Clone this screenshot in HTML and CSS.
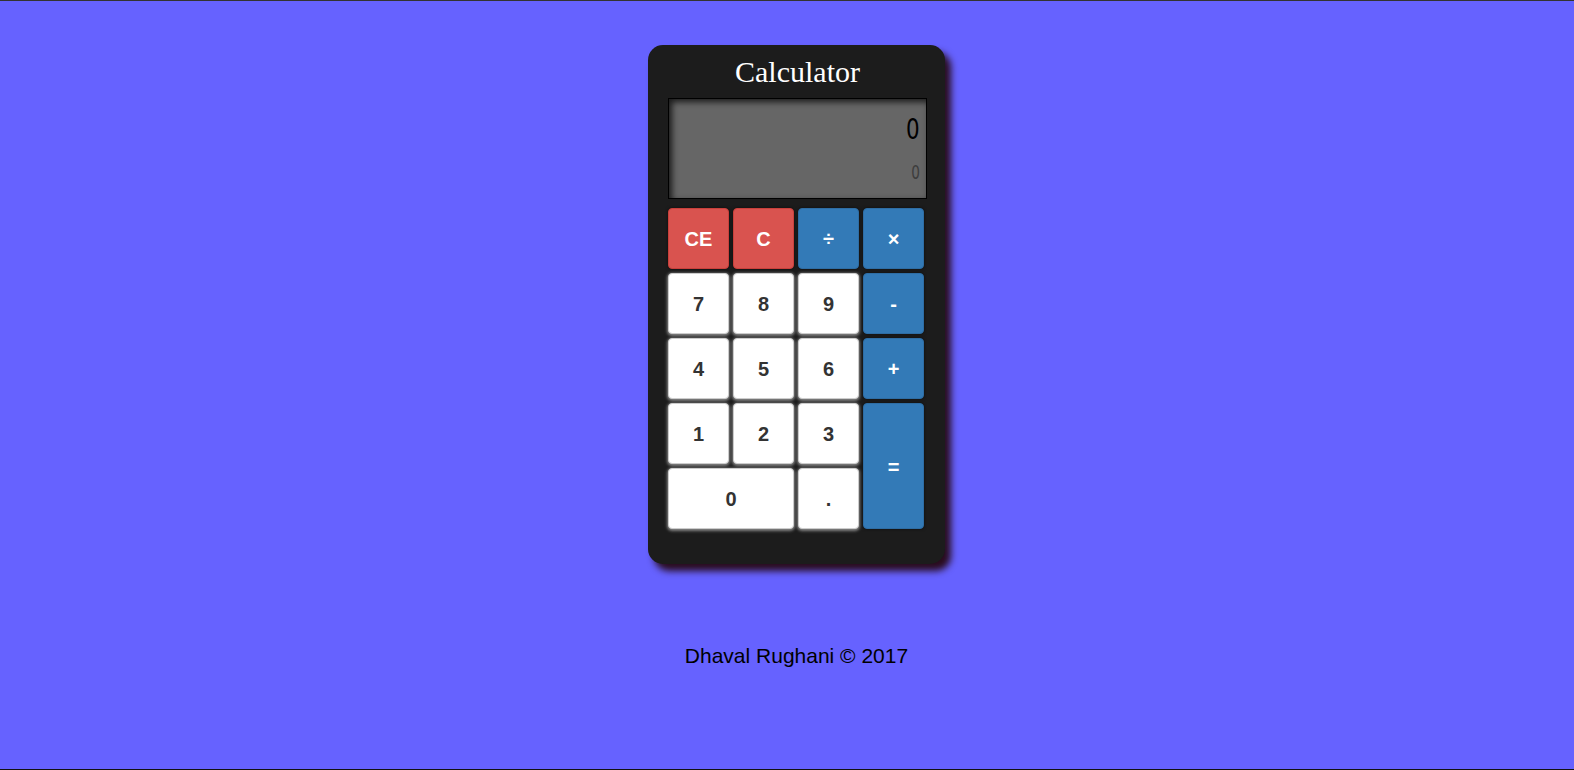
FILE: index.html
```html
<!DOCTYPE html>
<html>
<head>
<meta charset="utf-8">
<title>Calculator</title>
<link rel="stylesheet" href="styles.css">
</head>
<body>
<div class="page">
  <div class="calculator">
    <h1 class="title">Calculator</h1>
    <div class="screen">
      <div class="current">0</div>
      <div class="history">0</div>
    </div>
    <div class="keys">
      <button class="key danger">CE</button>
      <button class="key danger">C</button>
      <button class="key primary">÷</button>
      <button class="key primary">×</button>
      <button class="key light">7</button>
      <button class="key light">8</button>
      <button class="key light">9</button>
      <button class="key primary">-</button>
      <button class="key light">4</button>
      <button class="key light">5</button>
      <button class="key light">6</button>
      <button class="key primary">+</button>
      <button class="key light">1</button>
      <button class="key light">2</button>
      <button class="key light">3</button>
      <button class="key primary equals">=</button>
      <button class="key light zero">0</button>
      <button class="key light dot">.</button>
    </div>
  </div>
  <footer class="footer">Dhaval Rughani © 2017</footer>
</div>
</body>
</html>
```

FILE: styles.css
```css
html, body {
  margin: 0;
  padding: 0;
  height: 100%;
}
body {
  background: #6662ff;
  border-top: 1px solid #333;
  border-bottom: 1px solid #111;
  box-sizing: border-box;
  font-family: "Liberation Sans", Arial, sans-serif;
}
.page {
  display: flex;
  flex-direction: column;
  align-items: center;
  padding-left: 19px;
  padding-top: 44px;
}
.calculator {
  width: 297px;
  box-sizing: border-box;
  background: #1c1c1c;
  border-radius: 15px;
  padding: 10px 18px 35px 20px;
  box-shadow: 6px 7px 7px #2a0c1e;
}
.title {
  margin: 0 0 9px;
  text-align: center;
  color: #fff;
  font-family: "Liberation Serif", "Times New Roman", serif;
  font-weight: normal;
  font-size: 30px;
  line-height: 34px;
}
.screen {
  width: 259px;
  height: 101px;
  box-sizing: border-box;
  border: 1px solid #000;
  background: #666;
  box-shadow: inset 3px 3px 6px rgba(0,0,0,0.75);
  display: flex;
  flex-direction: column;
  align-items: flex-end;
  padding: 15px 6px 0 0;
}
.current {
  font-family: "Liberation Sans Narrow", "DejaVu Sans Condensed", sans-serif;
  font-size: 29px;
  line-height: 30px;
  color: #000;
  transform: scaleX(0.82);
  transform-origin: right center;
}
.history {
  margin-top: 17px;
  font-family: "Liberation Sans Narrow", "DejaVu Sans Condensed", sans-serif;
  font-size: 19px;
  line-height: 22px;
  color: #3d3d3d;
  transform: scaleX(0.8);
  transform-origin: right center;
}
.keys {
  margin-top: 9px;
  display: grid;
  grid-template-columns: repeat(4, 61px);
  grid-template-rows: repeat(5, 61px);
  gap: 4px;
}
.key {
  margin: 0;
  padding: 2px 0 0;
  font-family: "Liberation Sans", Arial, sans-serif;
  font-weight: bold;
  font-size: 20px;
  border-radius: 4px;
  border: 1px solid transparent;
  cursor: pointer;
}
.danger {
  background: #d9534f;
  border-color: #c9403b;
  color: #fff;
  box-shadow: 0 0 3px rgba(0,0,0,0.6);
}
.primary {
  background: #337ab7;
  border-color: #2e6da4;
  color: #fff;
  box-shadow: 0 0 3px rgba(0,0,0,0.6);
}
.light {
  background: #fff;
  border-color: #ccc;
  color: #333;
  box-shadow: 0 1px 3px 1px rgba(150,150,150,0.85);
}
.equals {
  grid-row: 4 / span 2;
  grid-column: 4;
}
.zero {
  grid-column: 1 / span 2;
}
.footer {
  margin-top: 80px;
  font-size: 21px;
  line-height: 23px;
  color: #000;
}
```
